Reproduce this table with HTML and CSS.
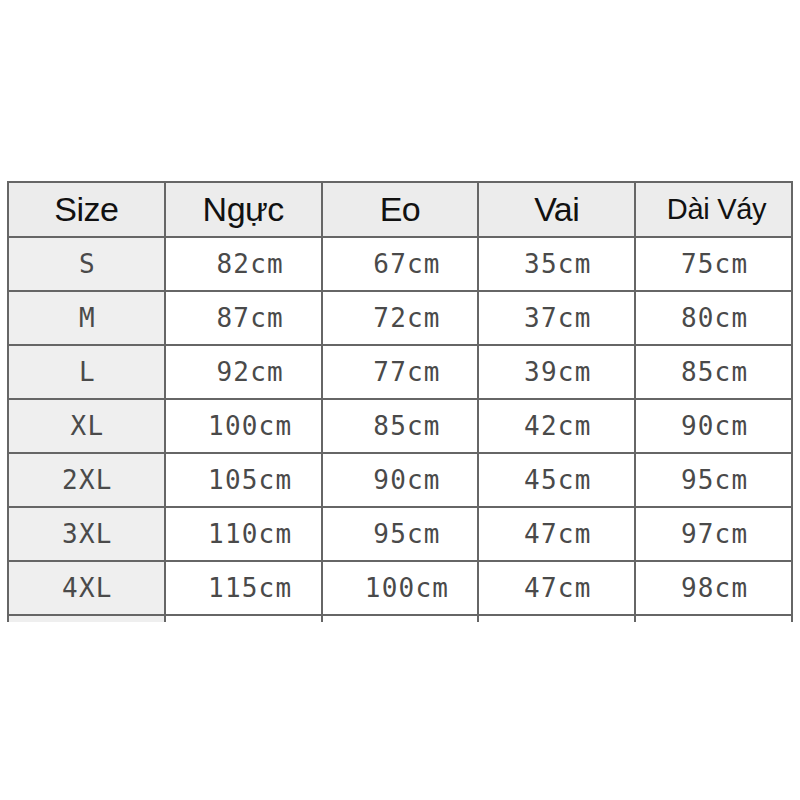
FILE: index.html
```html
<!DOCTYPE html>
<html lang="vi">
<head>
<meta charset="utf-8">
<title>Bảng size</title>
<link rel="stylesheet" href="styles.css">
</head>
<body>
<div class="sheet">
  <div class="chart">
    <div class="cell head first">Size</div>
    <div class="cell head">Ngực</div>
    <div class="cell head">Eo</div>
    <div class="cell head">Vai</div>
    <div class="cell head small">Dài Váy</div>

    <div class="cell size">S</div><div class="cell off">82cm</div><div class="cell off">67cm</div><div class="cell">35cm</div><div class="cell">75cm</div>
    <div class="cell size">M</div><div class="cell off">87cm</div><div class="cell off">72cm</div><div class="cell">37cm</div><div class="cell">80cm</div>
    <div class="cell size">L</div><div class="cell off">92cm</div><div class="cell off">77cm</div><div class="cell">39cm</div><div class="cell">85cm</div>
    <div class="cell size">XL</div><div class="cell off">100cm</div><div class="cell off">85cm</div><div class="cell">42cm</div><div class="cell">90cm</div>
    <div class="cell size">2XL</div><div class="cell off">105cm</div><div class="cell off">90cm</div><div class="cell">45cm</div><div class="cell">95cm</div>
    <div class="cell size">3XL</div><div class="cell off">110cm</div><div class="cell off">95cm</div><div class="cell">47cm</div><div class="cell">97cm</div>
    <div class="cell size">4XL</div><div class="cell off">115cm</div><div class="cell off">100cm</div><div class="cell">47cm</div><div class="cell">98cm</div>
    <div class="cell size"></div><div class="cell"></div><div class="cell"></div><div class="cell"></div><div class="cell"></div>
  </div>
</div>
</body>
</html>
```

FILE: styles.css
```css
* { box-sizing: border-box; }
html, body { margin: 0; padding: 0; background: #fff; }
.sheet {
  width: 800px;
  height: 800px;
  padding: 181px 7px 0 7px;
}
.chart {
  display: grid;
  grid-template-columns: repeat(5, 1fr);
  grid-template-rows: 55px repeat(8, 54px);
  width: 786px;
  height: 441px;
  overflow: hidden;
  border-top: 2px solid #666;
  border-left: 2px solid #666;
}
.cell {
  display: flex;
  align-items: center;
  justify-content: center;
  border-right: 2px solid #666;
  border-bottom: 2px solid #666;
  font-family: "DejaVu Sans Mono", "Liberation Mono", monospace;
  font-size: 26px;
  letter-spacing: 1.2px;
  color: #4a4a4a;
  background: #fff;
  padding-left: 2px;
}
.cell.off { padding-left: 14px; }
.head {
  font-family: "Liberation Sans", Arial, sans-serif;
  font-size: 34px;
  letter-spacing: -0.5px;
  color: #111;
  background: #ececec;
  padding-left: 0;
}
.head.small { font-size: 29px; letter-spacing: -0.3px; padding-left: 6px; }
.size { background: #efefef; }
```
